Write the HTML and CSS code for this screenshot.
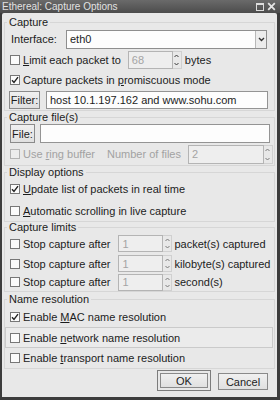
FILE: index.html
```html
<!DOCTYPE html>
<html>
<head>
<meta charset="utf-8">
<link rel="stylesheet" href="styles.css">
</head>
<body>
<div class="win">
  <div class="titlebar">
    <span class="title">Ethereal: Capture Options</span>
    <span class="tb-btns">
      <svg width="8" height="8" viewBox="0 0 8 8"><rect x="0.5" y="0.5" width="7" height="7" fill="none" stroke="#dcdcdc"/><line x1="0" y1="1.5" x2="8" y2="1.5" stroke="#dcdcdc"/></svg>
      <svg width="9" height="9" viewBox="0 0 9 9"><path d="M1.2 1.2L7.8 7.8M7.8 1.2L1.2 7.8" stroke="#e4e4e4" stroke-width="1.8"/></svg>
    </span>
  </div>
  <div class="body">
    <fieldset class="frame f1">
      <legend>Capture</legend>
      <div class="row r-iface">
        <span class="iface-lbl">Interface:</span>
        <div class="combo">
          <span class="combo-text">eth0</span>
          <span class="combo-btn"><svg width="7" height="5" viewBox="0 0 7 5"><path d="M1 1L3.5 3.5L6 1" fill="none" stroke="#333" stroke-width="1.4"/></svg></span>
        </div>
      </div>
      <div class="row r-limit">
        <span class="cb"></span><span class="txt"><u>L</u>imit each packet to</span>
        <span class="spin sp-limit"><span class="spin-entry">68</span><span class="spin-arrows dark"><svg width="5" height="4" viewBox="0 0 5 4"><path d="M0.5 3L2.5 1L4.5 3" fill="none" stroke="currentColor"/></svg><svg width="5" height="4" viewBox="0 0 5 4"><path d="M0.5 1L2.5 3L4.5 1" fill="none" stroke="currentColor"/></svg></span></span>
        <span class="txt after-spin">bytes</span>
      </div>
      <div class="row r-promisc">
        <span class="cb on"><svg width="8" height="8" viewBox="0 0 8 8"><path d="M1 4.2L3 6.5L7 1.2" fill="none" stroke="#222" stroke-width="1.4"/></svg></span><span class="txt">Capture packets in <u>p</u>romiscuous mode</span>
      </div>
      <div class="row r-filter">
        <span class="btn btn-filter">Filter:</span>
        <span class="entry entry-filter">host 10.1.197.162 and www.sohu.com</span>
      </div>
    </fieldset>

    <fieldset class="frame f2">
      <legend>Capture file(s)</legend>
      <div class="row r-file">
        <span class="btn btn-file">File:</span>
        <span class="entry entry-file"></span>
      </div>
      <div class="row r-ring">
        <span class="cb off"></span><span class="txt dis">Use <u>r</u>ing buffer</span>
        <span class="txt dis numfiles">Number of files</span>
        <span class="spin sp-ring"><span class="spin-entry">2</span><span class="spin-arrows"><svg width="5" height="4" viewBox="0 0 5 4"><path d="M0.5 3L2.5 1L4.5 3" fill="none" stroke="currentColor"/></svg><svg width="5" height="4" viewBox="0 0 5 4"><path d="M0.5 1L2.5 3L4.5 1" fill="none" stroke="currentColor"/></svg></span></span>
      </div>
    </fieldset>

    <fieldset class="frame f3">
      <legend>Display options</legend>
      <div class="row r-update">
        <span class="cb on"><svg width="8" height="8" viewBox="0 0 8 8"><path d="M1 4.2L3 6.5L7 1.2" fill="none" stroke="#222" stroke-width="1.4"/></svg></span><span class="txt"><u>U</u>pdate list of packets in real time</span>
      </div>
      <div class="row r-auto">
        <span class="cb"></span><span class="txt"><u>A</u>utomatic scrolling in live capture</span>
      </div>
    </fieldset>

    <fieldset class="frame f4">
      <legend>Capture limits</legend>
      <div class="row r-stop1">
        <span class="cb"></span><span class="txt">Stop capture after</span>
        <span class="spin sp-stop"><span class="spin-entry">1</span><span class="spin-arrows"><svg width="5" height="4" viewBox="0 0 5 4"><path d="M0.5 3L2.5 1L4.5 3" fill="none" stroke="currentColor"/></svg><svg width="5" height="4" viewBox="0 0 5 4"><path d="M0.5 1L2.5 3L4.5 1" fill="none" stroke="currentColor"/></svg></span></span>
        <span class="txt after-stop">packet(s) captured</span>
      </div>
      <div class="row r-stop2">
        <span class="cb"></span><span class="txt">Stop capture after</span>
        <span class="spin sp-stop"><span class="spin-entry">1</span><span class="spin-arrows"><svg width="5" height="4" viewBox="0 0 5 4"><path d="M0.5 3L2.5 1L4.5 3" fill="none" stroke="currentColor"/></svg><svg width="5" height="4" viewBox="0 0 5 4"><path d="M0.5 1L2.5 3L4.5 1" fill="none" stroke="currentColor"/></svg></span></span>
        <span class="txt after-stop">kilobyte(s) captured</span>
      </div>
      <div class="row r-stop3">
        <span class="cb"></span><span class="txt">Stop capture after</span>
        <span class="spin sp-stop"><span class="spin-entry">1</span><span class="spin-arrows"><svg width="5" height="4" viewBox="0 0 5 4"><path d="M0.5 3L2.5 1L4.5 3" fill="none" stroke="currentColor"/></svg><svg width="5" height="4" viewBox="0 0 5 4"><path d="M0.5 1L2.5 3L4.5 1" fill="none" stroke="currentColor"/></svg></span></span>
        <span class="txt after-stop">second(s)</span>
      </div>
    </fieldset>

    <fieldset class="frame f5">
      <legend>Name resolution</legend>
      <div class="row r-mac">
        <span class="cb on"><svg width="8" height="8" viewBox="0 0 8 8"><path d="M1 4.2L3 6.5L7 1.2" fill="none" stroke="#222" stroke-width="1.4"/></svg></span><span class="txt">Enable <u>M</u>AC name resolution</span>
      </div>
      <div class="row r-net">
        <span class="cb"></span><span class="txt">Enable <u>n</u>etwork name resolution</span>
      </div>
      <div class="row r-trans">
        <span class="cb"></span><span class="txt">Enable <u>t</u>ransport name resolution</span>
      </div>
    </fieldset>

    <div class="actions">
      <span class="default-ring"><span class="btn btn-ok">OK</span></span>
      <span class="btn btn-cancel">Cancel</span>
    </div>
  </div>
</div>
</body>
</html>
```

FILE: styles.css
```css
* { box-sizing: border-box; }
html, body { margin: 0; padding: 0; }
body {
  width: 280px;
  height: 400px;
  overflow: hidden;
  background: #3c3c3c;
  font-family: "Liberation Sans", Arial, sans-serif;
  font-size: 11px;
  color: #1c1c1c;
}
u { text-decoration: underline; text-underline-offset: 1px; }

.win { height: 400px; display: flex; flex-direction: column; }

.titlebar {
  height: 13px;
  flex: none;
  display: flex;
  align-items: center;
  justify-content: space-between;
  padding: 0 4px 0 2px;
  background: linear-gradient(#6a6a6a, #4c4c4c);
  color: #e2e2e2;
  font-size: 10px;
  white-space: nowrap;
}
.tb-btns { display: flex; align-items: center; gap: 3px; }
.tb-btns svg { display: block; }

.body {
  flex: 1;
  margin: 0 3px 3px 2px;
  background: #e8e8e8;
  padding-top: 2px;
  display: flex;
  flex-direction: column;
  border-radius: 2px 2px 0 0;
}

.frame {
  margin: 0 2px;
  padding: 0;
  border: 1px solid #d6d6d6;
  min-width: 0;
}
.frame legend { margin-left: 2px; padding: 0 2px; }
.f1 legend { line-height: 14px; }
.f2 legend { line-height: 13px; }
.f3 legend { line-height: 12px; }
.f4 legend { line-height: 11px; }
.f5 legend { line-height: 14px; }

.row { display: flex; align-items: center; padding-left: 5px; white-space: nowrap; }
.r-iface { height: 20px; padding-left: 6px; }
.r-limit { height: 21px; }
.r-promisc { height: 19px; }
.r-filter { height: 21px; padding-left: 4px; }
.r-file { height: 19px; padding-left: 5px; }
.r-ring { height: 22px; }
.r-update { height: 22px; }
.r-auto { height: 21px; }
.r-stop1 { height: 21px; }
.r-stop2 { height: 19px; }
.r-stop3 { height: 18px; }
.r-mac { height: 21px; }
.r-net {
  height: 21px;
  padding-left: 4px;
  margin-right: 1px;
  border: 1px solid #cacaca;
  background: #ebebeb;
}
.r-trans { height: 20px; }

.cb {
  width: 10px;
  height: 10px;
  flex: none;
  border: 1px solid #777777;
  background: #fbfbfb;
  margin-right: 3px;
  display: flex;
  align-items: center;
  justify-content: center;
}
.cb svg { display: block; }
.cb.off { border-color: #b2b2b2; background: #ececec; }
.dis { color: #a2a2a2; }

.iface-lbl { width: 55px; flex: none; }
.combo {
  width: 201px;
  height: 19px;
  flex: none;
  display: flex;
  align-items: center;
  border: 1px solid #8e8e8e;
  background: #fdfdfd;
}
.combo-text { flex: 1; padding-left: 3px; }
.combo-btn {
  width: 11px;
  height: 100%;
  border-left: 1px solid #b8b8b8;
  background: #ececec;
  display: flex;
  align-items: center;
  justify-content: center;
}
.combo-btn svg { display: block; }

.spin { display: flex; flex: none; height: 18px; }
.spin-entry {
  border: 1px solid #b4b4b4;
  background: #eeeeee;
  color: #a4a4a4;
  padding-left: 3px;
  display: flex;
  align-items: center;
  height: 100%;
}
.spin-arrows {
  width: 9px;
  height: 100%;
  display: flex;
  flex-direction: column;
  align-items: center;
  justify-content: space-between;
  padding: 2px 0;
  color: #7a7a7a;
  border: 1px solid #d0d0d0;
  border-left: none;
}
.spin-arrows.dark { color: #3a3a3a; }
.spin-arrows svg { display: block; }

.sp-limit { margin-left: 7px; }
.sp-limit .spin-entry { width: 45px; }
.after-spin { margin-left: 3px; }

.numfiles { margin-left: 12px; }
.sp-ring { margin-left: 7px; height: 19px; }
.sp-ring .spin-entry { width: 76px; }

.sp-stop { margin-left: 8px; height: 17px; }
.sp-stop .spin-entry { width: 45px; }
.after-stop { margin-left: 2px; }

.btn {
  display: flex;
  align-items: center;
  justify-content: center;
  flex: none;
  border: 1px solid #8a8a8a;
  background: linear-gradient(#f0f0f0, #e0e0e0);
}
.btn-filter { width: 31px; height: 18px; }
.btn-file { width: 25px; height: 19px; }

.entry {
  display: flex;
  align-items: center;
  flex: none;
  border: 1px solid #949494;
  background: #fdfdfd;
  padding-left: 3px;
}
.entry-filter { width: 222px; height: 18px; margin-left: 6px; }
.entry-file { width: 230px; height: 19px; margin-left: 5px; }

.actions {
  flex: 1;
  display: flex;
  justify-content: flex-end;
  align-items: flex-start;
  padding: 1px 9px 0 0;
  gap: 7px;
}
.default-ring {
  display: flex;
  border: 1px solid #7c7c7c;
  padding: 2px;
}
.btn-ok { width: 48px; height: 15px; }
.btn-cancel { width: 50px; height: 17px; margin-top: 3px; }
```
